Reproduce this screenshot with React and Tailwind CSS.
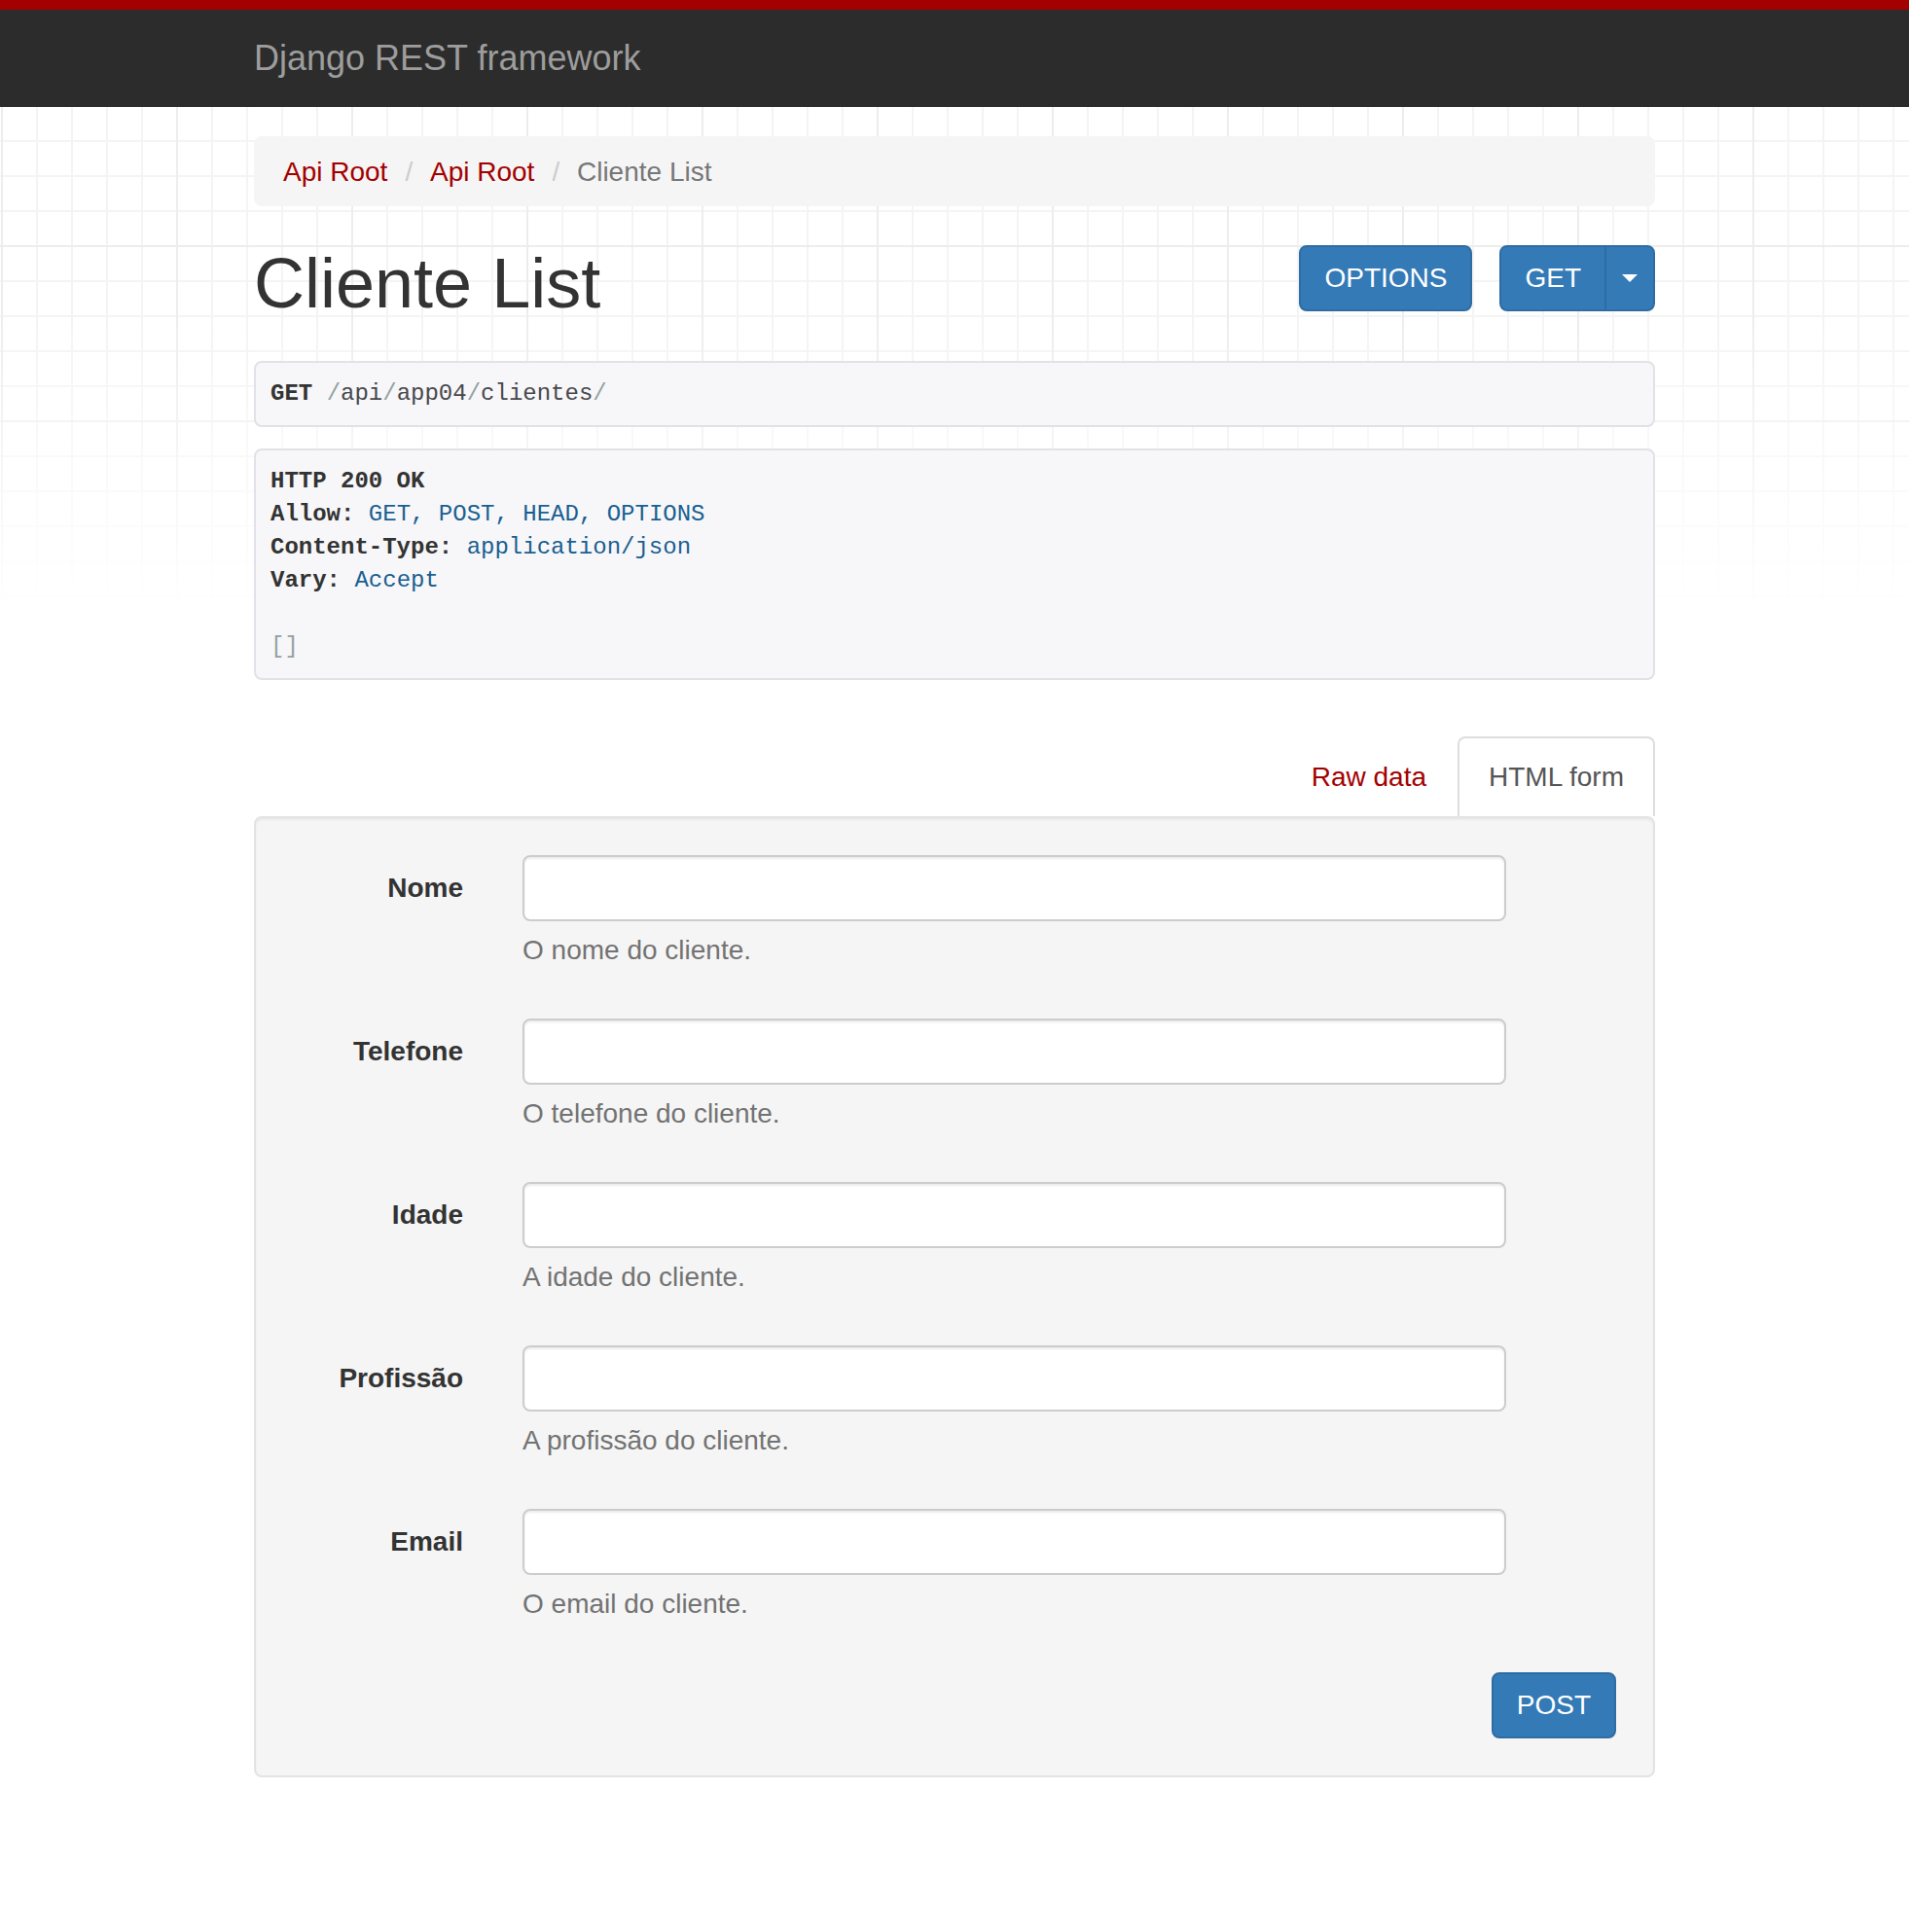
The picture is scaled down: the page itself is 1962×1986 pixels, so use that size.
const fields = [
  { label: 'Nome', help: 'O nome do cliente.' },
  { label: 'Telefone', help: 'O telefone do cliente.' },
  { label: 'Idade', help: 'A idade do cliente.' },
  { label: 'Profissão', help: 'A profissão do cliente.' },
  { label: 'Email', help: 'O email do cliente.' },
]

const btn =
  'rounded-[8px] border-2 border-[#2e6da4] bg-[#337ab7] px-[24px] py-[12px] text-[28px] leading-[40px] text-white'

function Slash() {
  return <span className="text-[#93a1a1]">/</span>
}

function Sep() {
  return <span className="pl-[18px] pr-[10px] text-[#ccc]">/&nbsp;</span>
}

function Header({ name, children }) {
  return (
    <div>
      <b className="font-bold text-[#333]">{name}:</b>{' '}
      <span className="text-[#195f91]">{children}</span>
    </div>
  )
}

export default function App() {
  return (
    <div className="min-h-screen bg-white font-['Liberation_Sans',Arial,sans-serif] text-[#333] [background-image:linear-gradient(to_bottom,rgba(255,255,255,0)_320px,#fff_630px),linear-gradient(to_right,#ededed_2px,transparent_2px),linear-gradient(to_bottom,#ededed_2px,transparent_2px),linear-gradient(to_right,#f4f4f4_2px,transparent_2px),linear-gradient(to_bottom,#f4f4f4_2px,transparent_2px)] [background-size:100%_100%,180px_180px,180px_180px,36px_36px,36px_36px] [background-position:0_0,1px_0,0_72px,1px_0,0_0]">
      {/* top navbar */}
      <div className="h-[110px] border-t-[10px] border-t-[#a30000] bg-[#2c2c2c]">
        <div className="mx-auto w-[1440px]">
          <span className="block py-[30px] text-[36px] leading-[40px] text-[#9d9d9d]">
            Django REST framework
          </span>
        </div>
      </div>

      <div className="mx-auto w-[1440px] pb-[80px]">
        {/* breadcrumb */}
        <div className="mt-[30px] flex rounded-[8px] bg-[#f5f5f5] px-[30px] pb-[15px] pt-[17px] text-[28px] leading-[40px]">
          <span className="text-[#a30000]">Api Root</span>
          <Sep />
          <span className="text-[#a30000]">Api Root</span>
          <Sep />
          <span className="text-[#777]">Cliente List</span>
        </div>

        {/* title + actions */}
        <div className="mt-[40px] flex items-start justify-between">
          <h1 className="text-[72px] font-normal leading-[79px] text-[#333]">Cliente List</h1>
          <div className="flex gap-[28px]">
            <button className={btn}>OPTIONS</button>
            <div className="flex">
              <button className={`${btn} rounded-r-none`}>GET</button>
              <button className="-ml-[2px] flex items-center rounded-r-[8px] border-2 border-[#2e6da4] bg-[#337ab7] px-[16px]">
                <span className="h-0 w-0 border-x-[8px] border-t-[8px] border-x-transparent border-t-white" />
              </button>
            </div>
          </div>
        </div>

        {/* request */}
        <div className="mt-[40px] rounded-[8px] border-2 border-[#e1e1e8] bg-[#f7f7f9] p-[15px] font-['Liberation_Mono',monospace] text-[24px] leading-[34px] text-[#48484c]">
          <b className="font-bold text-[#333]">GET</b>{' '}
          <Slash />api<Slash />app04<Slash />clientes<Slash />
        </div>

        {/* response */}
        <div className="mt-[22px] rounded-[8px] border-2 border-[#e1e1e8] bg-[#f7f7f9] p-[15px] font-['Liberation_Mono',monospace] text-[24px] leading-[34px] text-[#333]">
          <div className="font-bold">HTTP 200 OK</div>
          <Header name="Allow">GET, POST, HEAD, OPTIONS</Header>
          <Header name="Content-Type">application/json</Header>
          <Header name="Vary">Accept</Header>
          <div className="h-[34px]" />
          <div className="text-[#93a1a1]">[]</div>
        </div>

        {/* form switcher */}
        <div className="mt-[58px] flex justify-end text-[28px] leading-[40px]">
          <span className="border-2 border-b-0 border-transparent px-[30px] py-[20px] text-[#a30000]">
            Raw data
          </span>
          <span className="rounded-t-[8px] border-2 border-b-0 border-[#ddd] bg-white px-[30px] py-[20px] text-[#555]">
            HTML form
          </span>
        </div>

        <div className="rounded-[8px] border-2 border-[#e3e3e3] bg-[#f5f5f5] p-[38px] shadow-[inset_0_2px_2px_rgba(0,0,0,0.05)]">
          {fields.map((f) => (
            <div key={f.label} className="mb-[30px] flex text-[28px] leading-[40px]">
              <label className="w-[175px] pt-[14px] text-right font-bold text-[#333]">{f.label}</label>
              <div className="ml-[61px] w-[1011px]">
                <input
                  type="text"
                  className="block h-[68px] w-full rounded-[8px] border-2 border-[#ccc] bg-white px-[24px] shadow-[inset_0_2px_2px_rgba(0,0,0,0.075)] outline-none"
                />
                <p className="mb-[20px] mt-[10px] text-[#737373]">{f.help}</p>
              </div>
            </div>
          ))}
          <div className="flex justify-end">
            <button className={btn}>POST</button>
          </div>
        </div>
      </div>
    </div>
  )
}
